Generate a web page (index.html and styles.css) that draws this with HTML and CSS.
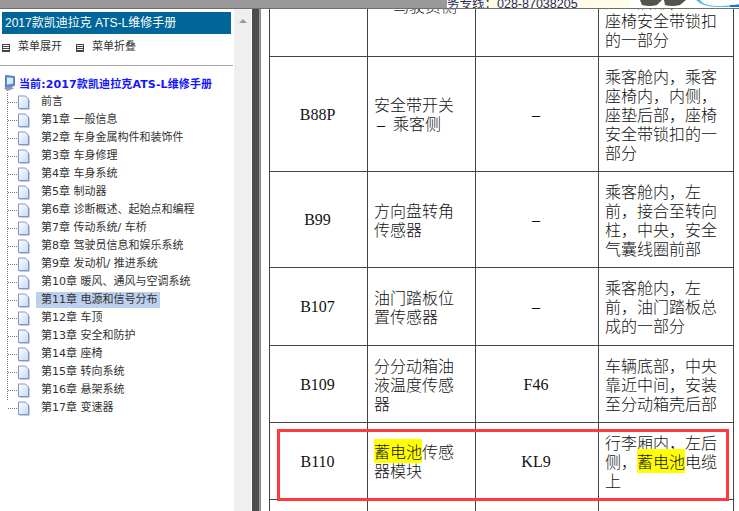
FILE: index.html
```html
<!DOCTYPE html>
<html lang="zh">
<head>
<meta charset="utf-8">
<title>2017款凯迪拉克 ATS-L维修手册</title>
<link rel="stylesheet" href="styles.css">
</head>
<body>
<svg class="defs" width="0" height="0" aria-hidden="true">
  <defs>
    <linearGradient id="pg" x1="0" y1="0" x2="1" y2="1"><stop offset="0" stop-color="#ffffff"/><stop offset="1" stop-color="#c4d8f6"/></linearGradient>
    <symbol id="page" viewBox="0 0 13 15">
      <path d="M2.5 2.5H9.5L12.5 5.5V14.5H2.5Z" fill="#9a9aa8"/>
      <path d="M1.5 1H8.5L11.5 4V13.5H1.5Z" fill="url(#pg)" stroke="#7f95c8"/>
    </symbol>
  </defs>
</svg>
<header class="topbar">
  <div class="top-gray"></div>
  <div class="top-hotline"><span class="hotline-text">务专线：028-87038205</span></div>
  <svg class="top-logo" width="109" height="8" viewBox="0 0 109 8">
    <path d="M10 0H32L27 5Q20 7 12 5Z" fill="#55534c"/>
    <path d="M34 0H56L50 5Q42 7 35 5Z" fill="#55534c"/>
    <path d="M70 0Q74 6 90 6Q100 6 109 4V7H88Q72 7 66 0Z" fill="#5cc0e6"/>
    <rect x="100" y="5" width="9" height="2" fill="#1f6fd0"/>
  </svg>
</header>
<div class="panes">
  <aside class="side">
    <div class="side-title">2017款凯迪拉克 ATS-L维修手册</div>
    <div class="menu-actions">
      <span class="menu-action"><span class="menu-icon"></span>菜单展开</span>
      <span class="menu-action"><span class="menu-icon"></span>菜单折叠</span>
    </div>
    <div class="root-row">
      <svg class="root-icon" width="12" height="16" viewBox="0 0 12 16">
        <path d="M2.5 0.5L11.5 1.5V10.5L8 11.5L2.5 12.5Z" fill="#5f8fd8" stroke="#5a7aa8"/>
        <path d="M4 2.5L10 3V8.5L4 9.5Z" fill="#d8ebff"/>
        <path d="M1 13L8 11.5L11 13.5L4 16Z" fill="#8c9ab4"/>
      </svg>
      <span class="root-label">当前:2017款凯迪拉克ATS-L维修手册</span>
    </div>
    <ul class="tree">
      <li class="node"><svg class="page-icon"><use href="#page"/></svg><span class="node-label">前言</span></li>
      <li class="node"><svg class="page-icon"><use href="#page"/></svg><span class="node-label">第1章 一般信息</span></li>
      <li class="node"><svg class="page-icon"><use href="#page"/></svg><span class="node-label">第2章 车身金属构件和装饰件</span></li>
      <li class="node"><svg class="page-icon"><use href="#page"/></svg><span class="node-label">第3章 车身修理</span></li>
      <li class="node"><svg class="page-icon"><use href="#page"/></svg><span class="node-label">第4章 车身系统</span></li>
      <li class="node"><svg class="page-icon"><use href="#page"/></svg><span class="node-label">第5章 制动器</span></li>
      <li class="node"><svg class="page-icon"><use href="#page"/></svg><span class="node-label">第6章 诊断概述、起始点和编程</span></li>
      <li class="node"><svg class="page-icon"><use href="#page"/></svg><span class="node-label">第7章 传动系统/ 车桥</span></li>
      <li class="node"><svg class="page-icon"><use href="#page"/></svg><span class="node-label">第8章 驾驶员信息和娱乐系统</span></li>
      <li class="node"><svg class="page-icon"><use href="#page"/></svg><span class="node-label">第9章 发动机/ 推进系统</span></li>
      <li class="node"><svg class="page-icon"><use href="#page"/></svg><span class="node-label">第10章 暖风、通风与空调系统</span></li>
      <li class="node"><svg class="page-icon"><use href="#page"/></svg><span class="node-label selected">第11章 电源和信号分布</span></li>
      <li class="node"><svg class="page-icon"><use href="#page"/></svg><span class="node-label">第12章 车顶</span></li>
      <li class="node"><svg class="page-icon"><use href="#page"/></svg><span class="node-label">第13章 安全和防护</span></li>
      <li class="node"><svg class="page-icon"><use href="#page"/></svg><span class="node-label">第14章 座椅</span></li>
      <li class="node"><svg class="page-icon"><use href="#page"/></svg><span class="node-label">第15章 转向系统</span></li>
      <li class="node"><svg class="page-icon"><use href="#page"/></svg><span class="node-label">第16章 悬架系统</span></li>
      <li class="node"><svg class="page-icon"><use href="#page"/></svg><span class="node-label">第17章 变速器</span></li>
    </ul>
  </aside>
  <div class="scrollbar"><span class="scroll-up"></span></div>
  <div class="divider"></div>
  <main class="content">
    <table class="parts">
      <colgroup><col class="c1"><col class="c2"><col class="c3"><col class="c4"></colgroup>
      <tr class="r-first">
        <td class="code"></td>
        <td class="cell-raised">安全带开关<br><span class="dash">–</span>驾驶员侧</td>
        <td class="code">–</td>
        <td>乘客舱内，驾驶<br>员座椅内，内侧，<br>座垫后部，<br>座椅安全带锁扣<br>的一部分</td>
      </tr>
      <tr class="r-115">
        <td class="code">B88P</td>
        <td>安全带开关<br><span class="dash">–</span>乘客侧</td>
        <td class="code">–</td>
        <td>乘客舱内，乘客<br>座椅内，内侧，<br>座垫后部，座椅<br>安全带锁扣的一<br>部分</td>
      </tr>
      <tr class="r-96">
        <td class="code">B99</td>
        <td>方向盘转角<br>传感器</td>
        <td class="code">–</td>
        <td>乘客舱内，左<br>前，接合至转向<br>柱，中央，安全<br>气囊线圈前部</td>
      </tr>
      <tr class="r-78">
        <td class="code">B107</td>
        <td>油门踏板位<br>置传感器</td>
        <td class="code">–</td>
        <td>乘客舱内，左<br>前，油门踏板总<br>成的一部分</td>
      </tr>
      <tr class="r-77">
        <td class="code">B109</td>
        <td>分分动箱油<br>液温度传感<br>器</td>
        <td class="code">F46</td>
        <td>车辆底部，中央<br>靠近中间，安装<br>至分动箱壳后部</td>
      </tr>
      <tr class="r-77">
        <td class="code">B110</td>
        <td><mark class="hit">蓄电池</mark>传感<br>器模块</td>
        <td class="code">KL9</td>
        <td>行李厢内，左后<br>侧，<mark class="hit">蓄电池</mark>电缆<br>上</td>
      </tr>
      <tr class="r-77">
        <td class="code"></td><td></td><td class="code"></td><td></td>
      </tr>
    </table>
    <div class="red-box"></div>
  </main>
</div>
</body>
</html>
```
FILE: styles.css
```css
html, body { margin: 0; padding: 0; }
body {
  width: 739px;
  height: 511px;
  overflow: hidden;
  display: flex;
  flex-direction: column;
  background: #fff;
  font-family: "DejaVu Sans", "Noto Sans CJK SC", sans-serif;
}
.defs { display: block; height: 0; }

.topbar {
  flex: none;
  height: 8px;
  display: flex;
  overflow: hidden;
  border-bottom: 1px solid #6e6e6e;
  background: #fff;
}
.top-gray { width: 447px; background: #999; }
.top-hotline {
  width: 183px;
  background: #fffbe8;
  display: flex;
  align-items: flex-end;
  overflow: hidden;
}
.hotline-text {
  font: 12.5px/14px "Liberation Sans", "Noto Sans CJK SC", sans-serif;
  color: #1e2a6b;
  white-space: nowrap;
  margin-bottom: -3px;
}
.top-logo { flex: none; display: block; }

.panes { flex: 1; display: flex; min-height: 0; }

.side {
  flex: none;
  width: 231px;
  padding: 3px 0 0;
  margin-right: 3px;
  color: #333;
  font-size: 11px;
}
.side-title {
  margin-left: 2px;
  height: 22px;
  background: #006699;
  color: #fff;
  font: 12px/22px "Liberation Sans", "Noto Sans CJK SC", sans-serif;
  padding-left: 3px;
}
.menu-actions {
  display: flex;
  gap: 12px;
  height: 30px;
  padding-top: 1px;
  border-bottom: 1px solid #a8a8a8;
  margin-right: -2px;
  align-items: flex-start;
  line-height: 24px;
}
.menu-action { display: flex; align-items: center; height: 24px; }
.menu-icon {
  width: 6px;
  height: 6px;
  margin: 2px 8px 0 2px;
  border: 1px solid #444;
  background: repeating-linear-gradient(#fff 0, #fff 1px, #444 1px, #444 2px);
}
.root-row { display: flex; align-items: center; height: 17px; margin-top: 8px; padding-left: 3px; }
.root-icon { flex: none; margin-right: 4px; }
.root-label {
  font: bold 11px/16px "DejaVu Sans", "Noto Sans CJK SC", sans-serif;
  color: #1414ff;
  white-space: nowrap;
  letter-spacing: 0.12px;
  margin-top: 4px;
}
.tree {
  list-style: none;
  margin: 2px 0 0 7px;
  padding: 0;
  background: repeating-linear-gradient(#777 0, #777 1px, transparent 1px, transparent 2px) 0 0 / 1px 308px no-repeat;
}
.node {
  display: flex;
  align-items: center;
  height: 18px;
  padding-left: 1px;
  background: repeating-linear-gradient(90deg, #777 0, #777 1px, transparent 1px, transparent 2px) 1px 9px / 9px 1px no-repeat;
}
.page-icon { flex: none; width: 13px; height: 15px; margin-left: 9px; }
.node-label {
  margin-left: 6px;
  padding: 0 2px 0 5px;
  height: 16px;
  line-height: 16px;
  white-space: nowrap;
  color: #333;
}
.node-label.selected { background: #bcd0ee; }

.scrollbar {
  flex: none;
  width: 18px;
  background: #efefef;
  border-right: 1px solid #fff;
  display: flex;
  justify-content: center;
  padding-top: 10px;
  box-sizing: border-box;
}
.scroll-up {
  width: 0;
  height: 0;
  border: 4px solid transparent;
  border-top: 0;
  border-bottom-color: #999;
}
.divider { flex: none; width: 7px; background: #4d4d4d; border-right: 1px solid #999; }

.content {
  flex: 1;
  min-width: 0;
  position: relative;
  overflow: hidden;
  border-left: 1px solid #8a8a8a;
  padding-left: 8px;
  font: 300 16px/19px "Noto Sans CJK SC", sans-serif;
  color: #111;
}
.parts {
  border-collapse: collapse;
  table-layout: fixed;
  width: 464px;
  margin-top: -63px;
}
.c1 { width: 98px; }
.c2 { width: 108px; }
.c3 { width: 123px; }
.c4 { width: 135px; }
.parts td {
  border: 1px solid #444;
  padding: 0 6px;
  vertical-align: middle;
  white-space: nowrap;
  line-height: 19px;
}
.parts td.code {
  padding: 0 8px 0 6px;
  text-align: center;
  font-family: "Liberation Serif", "Noto Sans CJK SC", serif;
  font-weight: 400;
}
.parts td.cell-raised { padding-bottom: 10px; }
.dash {
  font-family: "Liberation Serif", serif;
  font-weight: 400;
  margin: 0 8px 0 3px;
}
.r-first { height: 110px; }
.r-115 { height: 115px; }
.r-96 { height: 96px; }
.r-78 { height: 78px; }
.r-77 { height: 77px; }
.hit { background: #ffff00; color: #111; }
.red-box {
  position: absolute;
  left: 16px;
  top: 420px;
  width: 446px;
  height: 66px;
  border: 3px solid #ff3b3b;
}
```
